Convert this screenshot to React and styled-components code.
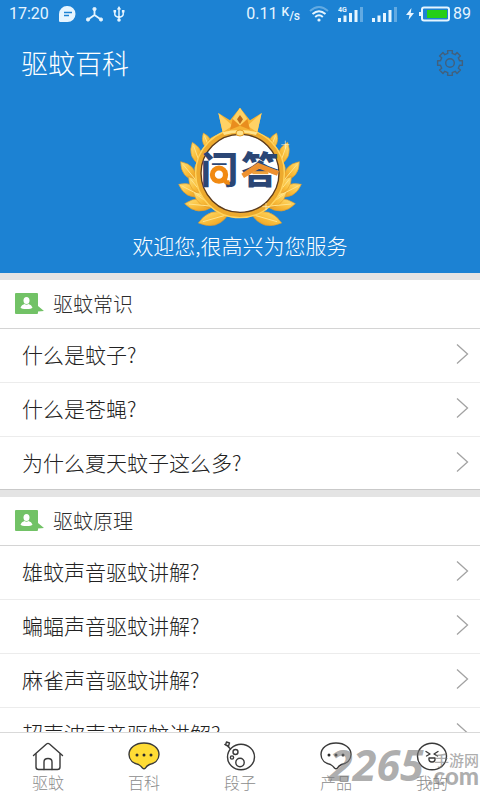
import React, { useState } from 'react'
import styled, { createGlobalStyle } from 'styled-components'

const GlobalStyle = createGlobalStyle`
    * {
        box-sizing: border-box;
    }
    body {
        margin: 0;
        background-color: #ffffff;
        font-family: "Noto Sans CJK SC", "Noto Sans", sans-serif;
        font-weight: 300;
    }
`

const Page = styled.div`
    display: flex;
    flex-direction: column;
    height: 100vh;
    overflow: hidden;
`

const Header = styled.header`
    flex: none;
    background-color: #1c82d3;
    color: #ffffff;
`

const StatusBar = styled.div`
    display: flex;
    justify-content: space-between;
    align-items: center;
    height: 28px;
    padding: 0 9px;
    font-family: Roboto, sans-serif;
    font-size: 16px;
    font-weight: 400;
    line-height: 20px;
    color: #e6f5ff;
`

const StatusGroup = styled.div`
    display: flex;
    align-items: center;
    gap: ${props => props.$gap}px;
`

const Speed = styled.span`
    display: flex;
    gap: 4px;
`

const SpeedUnit = styled.span`
    display: flex;
    font-size: 12px;
    font-weight: 500;
    line-height: 16px;
`

const UnitLow = styled.span`
    padding-top: 4px;
`

const TitleBar = styled.div`
    display: flex;
    justify-content: space-between;
    align-items: center;
    height: 70px;
    padding: 0 16px 0 21px;
`

const Title = styled.h1`
    margin: 0;
    font-size: 27px;
    font-weight: 300;
    line-height: 40px;
`

const IconButton = styled.button`
    display: flex;
    padding: 0;
    border: none;
    background: none;
    color: #42607c;
    cursor: pointer;
`

const Welcome = styled.div`
    display: flex;
    flex-direction: column;
    align-items: center;
    gap: 4px;
    padding: 9px 0 12px;
`

const WelcomeText = styled.p`
    margin: 0;
    font-size: 21px;
    line-height: 31px;
`

const Content = styled.main`
    flex: 1;
    min-height: 0;
    overflow-y: auto;
    scrollbar-width: none;
`

const Section = styled.section`
    border-top: 7px solid #e4e4e4;

    & + & {
        box-shadow: 0 -1px 0 #c9c9c9;
    }
`

const SectionHead = styled.div`
    display: flex;
    align-items: center;
    gap: 9px;
    height: 49px;
    padding: 0 15px;
    border-bottom: 1px solid #d4d4d4;
`

const SectionTitle = styled.h2`
    margin: 0;
    font-size: 20px;
    font-weight: 300;
    line-height: 30px;
    color: #2c2c2c;
`

const List = styled.ul`
    margin: 0;
    padding: 0;
    list-style: none;
`

const Item = styled.li`
    border-bottom: 1px solid #ececec;

    &:last-child {
        border-bottom: none;
    }
`

const ItemLink = styled.a`
    display: flex;
    justify-content: space-between;
    align-items: center;
    height: 53px;
    padding: 0 11px 3px 22px;
    font-size: 21px;
    line-height: 31px;
    color: #222222;
    text-decoration: none;
`

const TabBar = styled.nav`
    position: relative;
    flex: none;
    display: grid;
    grid-template-columns: repeat(5, 1fr);
    height: 68px;
    border-top: 1px solid #d9d9d9;
    background-color: #ffffff;
`

const Tab = styled.a`
    display: flex;
    flex-direction: column;
    align-items: center;
    padding-top: 8px;
    font-size: 16px;
    line-height: 20px;
    color: #8c8c8c;
    text-decoration: none;
`

const Watermark = styled.div`
    position: absolute;
    right: 1px;
    bottom: 13px;
    display: flex;
    align-items: center;
    gap: 4px;
    color: rgba(120, 120, 120, 0.6);
    pointer-events: none;
`

const WatermarkNumber = styled.span`
    font-family: "Open Sans", sans-serif;
    font-size: 43px;
    font-style: italic;
    font-weight: 700;
    line-height: 44px;
`

const WatermarkSide = styled.span`
    display: flex;
    flex-direction: column;
    align-items: flex-end;
    padding-top: 6px;
    font-size: 15px;
    font-weight: 500;
    line-height: 16px;
`

const WatermarkDomain = styled.span`
    font-family: Lato, sans-serif;
    font-size: 24px;
    font-weight: 900;
    line-height: 16px;
`

const sections = [
    {
        title: '驱蚊常识',
        items: ['什么是蚊子?', '什么是苍蝇?', '为什么夏天蚊子这么多?'],
    },
    {
        title: '驱蚊原理',
        items: ['雄蚊声音驱蚊讲解?', '蝙蝠声音驱蚊讲解?', '麻雀声音驱蚊讲解?', '超声波声音驱蚊讲解?'],
    },
]

const ChatIcon = () => (
    <svg width="17" height="16" viewBox="0 0 17 16">
        <path d="M8.5 0A8 8 0 0 1 8.5 16H1.2Q0 16 0 14.8V8A8.2 8 0 0 1 8.5 0Z" fill="currentColor" />
        <path d="M5 6.5h8M5 9.5h5" stroke="#1c82d3" strokeWidth="1.4" />
    </svg>
)

const HubIcon = () => (
    <svg width="17" height="15" viewBox="0 0 17 15" fill="currentColor" stroke="currentColor">
        <path d="M8.500 2v6L2 12.500M8.500 8l6.500 4.500" fill="none" strokeWidth="1.800" />
        <circle cx="8.500" cy="2" r="1.600" />
        <circle cx="2" cy="12.500" r="1.600" />
        <circle cx="15" cy="12.500" r="1.600" />
    </svg>
)

const UsbIcon = () => (
    <svg width="12" height="16" viewBox="0 0 12 16" fill="none" stroke="currentColor" strokeWidth="1.500">
        <path d="M6 2v12M1.800 5v3.500Q2 10.500 6 11.500Q10 10.500 10.200 8.500V5" />
        <path d="M6 0l2.200 3.500H3.800ZM.5 4h2.600v2.600H.5ZM8.900 4h2.600v2.600H8.900Z" fill="currentColor" stroke="none" />
        <circle cx="6" cy="14" r="1.800" fill="currentColor" stroke="none" />
    </svg>
)

const WifiIcon = () => (
    <svg width="20" height="16" viewBox="0 0 20 16" fill="none" stroke="currentColor" strokeWidth="1.900">
        <path d="M1 5Q10-3 19 5" opacity="0.35" />
        <path d="M3.500 8Q10 2.300 16.500 8" />
        <path d="M6.200 11Q10 7.500 13.800 11" />
        <circle cx="10" cy="14" r="1.600" fill="currentColor" stroke="none" />
    </svg>
)

const SignalIcon = ({ label }) => (
    <svg width="25" height="16" viewBox="0 0 25 16" fill="currentColor">
        <path d="M0 12h3v4H0ZM5.500 9.500h3V16h-3ZM11 7h3v9h-3ZM16.500 4h3v12h-3Z" />
        <path d="M22 1h3v15h-3Z" opacity="0.35" />
        {label && <text x="0" y="6" fontSize="7" fontWeight="700">{label}</text>}
    </svg>
)

const BatteryIcon = () => (
    <svg width="44" height="16" viewBox="0 0 44 16">
        <path d="M5.500 2L0 9h3.500L2.500 14L8 7H4.700Z" fill="currentColor" />
        <path d="M14 6v4" stroke="currentColor" strokeWidth="2" />
        <rect x="16" y="1.500" width="27" height="13" rx="2" fill="none" stroke="currentColor" strokeWidth="2" />
        <rect x="21" y="4" width="20" height="8" fill="#25cf17" />
    </svg>
)

// eight square teeth around a circle
const gearPoints = () => {
    const points = []
    for (let i = 0; i < 8; i++) {
        [[-13, 9.8], [-11, 12.6], [11, 12.6], [13, 9.8]].forEach(([offset, radius]) => {
            const angle = ((i * 45 + offset) * Math.PI) / 180
            points.push(`${14 + radius * Math.sin(angle)},${14 - radius * Math.cos(angle)}`)
        })
    }
    return points.join(' ')
}

const GearIcon = () => (
    <svg width="28" height="28" viewBox="0 0 28 28" fill="none" stroke="currentColor" strokeWidth="1.400" strokeLinejoin="round">
        <polygon points={gearPoints()} />
        <circle cx="14" cy="14" r="4.300" />
    </svg>
)

const leaves = [
    [130, 114, 152, 168],
    [168, 122, 138, 168],
    [97, 142, 122, 212],
    [142, 152, 120, 205],
    [62, 200, 110, 258],
    [122, 190, 112, 250],
    [56, 268, 126, 304],
    [86, 245, 130, 300],
    [74, 326, 160, 334],
    [100, 292, 165, 338],
    [115, 384, 206, 358],
]

const leafPath = ([x1, y1, x2, y2]) => {
    const mx = (x1 + x2) / 2
    const my = (y1 + y2) / 2
    const nx = (y2 - y1) * 0.42
    const ny = (x1 - x2) * 0.42
    return `M${x1} ${y1}Q${mx + nx} ${my + ny} ${x2} ${y2}Q${mx - nx} ${my - ny} ${x1} ${y1}Z`
}

const Laurel = () => (
    <g fill="url(#gold)" stroke="#e09a28" strokeWidth="2">
        {leaves.map((leaf, i) => <path key={i} d={leafPath(leaf)} />)}
        {leaves.map(([x1, y1, x2, y2], i) => (
            <path key={i} d={`M${x1 + (x2 - x1) * 0.15} ${y1 + (y2 - y1) * 0.15}L${x2} ${y2}`} stroke="#ffe38c" strokeWidth="3" />
        ))}
    </g>
)

const Emblem = () => (
    <svg width="126" height="119" viewBox="51 36 378 357" role="img" aria-label="问答">
        <defs>
            <linearGradient id="gold" x1="0" y1="0" x2="1" y2="1">
                <stop offset="0" stopColor="#ffe27a" />
                <stop offset="0.5" stopColor="#f9be3c" />
                <stop offset="1" stopColor="#e8961c" />
            </linearGradient>
        </defs>
        <Laurel />
        <g transform="translate(480 0) scale(-1 1)">
            <Laurel />
        </g>
        <circle cx="240" cy="235" r="125" fill="#ffffff" stroke="#edaa2e" strokeWidth="18" />
        <circle cx="240" cy="235" r="133" fill="none" stroke="#ffd35c" strokeWidth="4" />
        <circle cx="240" cy="235" r="117" fill="none" stroke="#5b3c20" strokeWidth="4" />
        <path d="M175 54L210 76L240 38L270 76L305 54L292 112Q240 98 188 112Z" fill="#f6b334" />
        <path d="M175 54L218 92L188 112ZM305 54L262 92L292 112ZM240 38L262 72L240 92L218 72Z" fill="#ffd265" />
        <path d="M218 72L210 104L240 92ZM262 72L270 104L240 92Z" fill="#e98d1e" />
        <path d="M240 60L249 73L240 87L231 73Z" fill="#b9691b" />
        <path d="M188 112Q240 98 292 112L288 120Q240 106 192 120Z" fill="#ffe38c" />
        <ellipse cx="240" cy="114" rx="12" ry="9" fill="#ffe38c" stroke="#e3991f" strokeWidth="3" />
        <g fill="#2b4675" fontSize="112" fontWeight="900">
            <text x="122" y="268">问</text>
            <text x="244" y="268">答</text>
        </g>
        <rect x="150" y="210" width="55" height="53" fill="#ffffff" />
        <circle cx="177" cy="239" r="20" fill="none" stroke="#f18a12" strokeWidth="15" />
        <path d="M195 225V257Q196 264 209 262" fill="none" stroke="#f18a12" strokeWidth="13" />
        <path d="M244 236L294 203L357 228L351 242L298 221L252 249Z" fill="#ee9130" />
        <path d="M278 233H325" stroke="#efa13c" strokeWidth="9" />
        <path d="M376 137V161M364 149H388M318 324V346M307 335H329" stroke="#fff7cf" strokeWidth="2" />
    </svg>
)

const ContactIcon = () => (
    <svg width="29" height="22" viewBox="0 0 29 22">
        <path d="M1 0H22Q23 0 23 1V13L29 18L23 18.500V20Q23 21 22 21H1Q0 21 0 20V1Q0 0 1 0Z" fill="#72c266" />
        <ellipse cx="11.500" cy="7.500" rx="3" ry="3.500" fill="#ffffff" />
        <path d="M5.500 14.500Q6.500 11.500 9.500 11Q11.500 12.500 13.500 11Q16.500 11.500 17.500 14.500Q16.500 16 11.500 16T5.500 14.500Z" fill="#ffffff" />
    </svg>
)

const ChevronIcon = () => (
    <svg width="13" height="22" viewBox="0 0 13 22" fill="none" stroke="#a3a3a3" strokeWidth="1.300">
        <path d="M1 1.500L11.500 11L1 20.500" />
    </svg>
)

const TabIcon = ({ children, fill = 'none' }) => (
    <svg width="32" height="31" viewBox="0 0 32 31" fill={fill} stroke="#393939" strokeWidth="1.400" strokeLinecap="round" strokeLinejoin="round">
        {children}
    </svg>
)

const HomeIcon = () => (
    <TabIcon>
        <path d="M1.500 14.500L14.500 3Q16 1.800 17.500 3L30.500 14.500" />
        <path d="M4 13V26Q4 28.500 6.500 28.500H25.500Q28 28.500 28 26V13" />
        <path d="M12 28.500V21Q12 17.500 16 17.500T20 21V28.500" />
    </TabIcon>
)

const BubbleIcon = ({ fill }) => (
    <TabIcon fill={fill}>
        <path d="M16 2C24.500 2 31 7 31 13.500C31 19 26.500 22.500 21.500 23.500Q18.500 25 17.500 27Q16 28.500 14.500 27Q13 25 10.500 23.500C5.500 22.500 1 19 1 13.500C1 7 7.500 2 16 2Z" />
        <g fill="#2b2b2b" stroke="none">
            <circle cx="9" cy="14" r="1.500" />
            <circle cx="16" cy="14" r="1.500" />
            <circle cx="23" cy="14" r="1.500" />
        </g>
    </TabIcon>
)

const PlanetIcon = () => (
    <TabIcon>
        <ellipse cx="17" cy="16" rx="13.500" ry="12.800" />
        <circle cx="11.500" cy="11" r="2.500" />
        <circle cx="8" cy="16.500" r="1.600" />
        <circle cx="16" cy="21.500" r="4.200" />
        <path d="M6.500 8L4 5.500M1.500 4L2.500 1L5.500 2L4.500 5ZM.8 3.500L5 6" />
    </TabIcon>
)

const FaceIcon = () => (
    <TabIcon>
        <ellipse cx="16" cy="15.500" rx="14.500" ry="13.300" />
        <path d="M10 10.500L14 13L10.500 15M22 10.500L18 13L21.500 15" />
        <path d="M13 17H19Q19.500 21 16 21T13 17Z" />
    </TabIcon>
)

const tabs = [
    { label: '驱蚊', icon: <HomeIcon /> },
    { label: '百科', icon: <BubbleIcon />, activeIcon: <BubbleIcon fill="#ffdc35" /> },
    { label: '段子', icon: <PlanetIcon /> },
    { label: '产品', icon: <BubbleIcon /> },
    { label: '我的', icon: <FaceIcon /> },
]

const QuestionSection = ({ title, items }) => {
    return (
        <Section>
            <SectionHead>
                <ContactIcon />
                <SectionTitle>{title}</SectionTitle>
            </SectionHead>
            <List>
                {items.map((item) => (
                    <Item key={item}>
                        <ItemLink href="#">
                            {item}
                            <ChevronIcon />
                        </ItemLink>
                    </Item>
                ))}
            </List>
        </Section>
    )
}

const App = () => {
    const [active, setActive] = useState('百科');

    return (
        <Page>
            <GlobalStyle />
            <Header>
                <StatusBar>
                    <StatusGroup $gap={10}>
                        <span>17:20</span>
                        <ChatIcon />
                        <HubIcon />
                        <UsbIcon />
                    </StatusGroup>
                    <StatusGroup $gap={9}>
                        <Speed>
                            0.11
                            <SpeedUnit>K<UnitLow>/s</UnitLow></SpeedUnit>
                        </Speed>
                        <WifiIcon />
                        <SignalIcon label="4G" />
                        <SignalIcon />
                        <StatusGroup $gap={3}>
                            <BatteryIcon />
                            <span>89</span>
                        </StatusGroup>
                    </StatusGroup>
                </StatusBar>
                <TitleBar>
                    <Title>驱蚊百科</Title>
                    <IconButton type="button" aria-label="设置">
                        <GearIcon />
                    </IconButton>
                </TitleBar>
                <Welcome>
                    <Emblem />
                    <WelcomeText>欢迎您,很高兴为您服务</WelcomeText>
                </Welcome>
            </Header>

            <Content>
                {sections.map((section) => (
                    <QuestionSection key={section.title} {...section} />
                ))}
            </Content>

            <TabBar>
                {tabs.map((tab) => (
                    <Tab key={tab.label} href="#" onClick={() => setActive(tab.label)}>
                        {active === tab.label && tab.activeIcon ? tab.activeIcon : tab.icon}
                        {tab.label}
                    </Tab>
                ))}
                <Watermark>
                    <WatermarkNumber>2265</WatermarkNumber>
                    <WatermarkSide>
                        手游网
                        <WatermarkDomain>.com</WatermarkDomain>
                    </WatermarkSide>
                </Watermark>
            </TabBar>
        </Page>
    )
}

export default App
